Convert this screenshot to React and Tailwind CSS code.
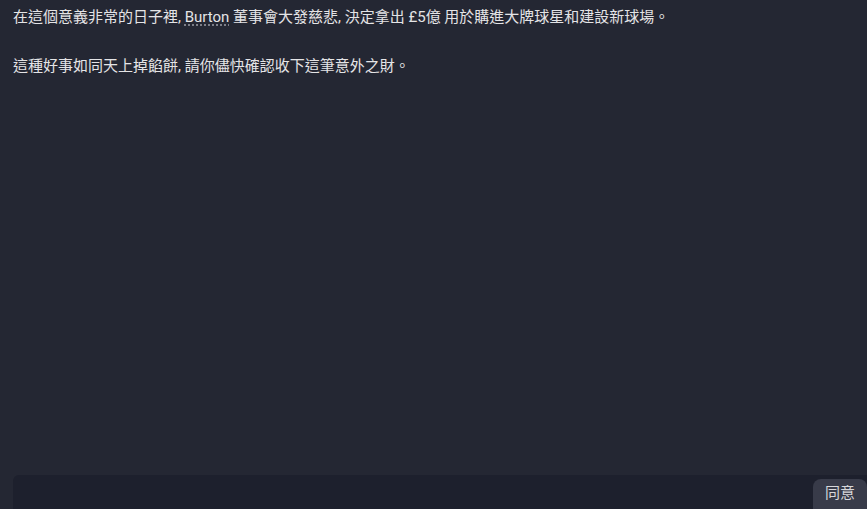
export default function App() {
    return (
        <div
            className="h-screen overflow-hidden bg-[#242733] text-[#e4e4e6] flex flex-col"
            style={{ fontFamily: 'Roboto, "Noto Sans CJK TC", sans-serif' }}
        >
            {/* MESSAGE */}
            <div className="h-[475px] shrink-0 px-[13px] pt-[6px] text-[15px] leading-[22px]">
                <p>
                    在這個意義非常的日子裡,{" "}
                    <span className="underline decoration-dotted decoration-[#9a9da6] underline-offset-[3px]">
                        Burton
                    </span>{" "}
                    董事會大發慈悲, 決定拿出 £5億 用於購進大牌球星和建設新球場。
                </p>
                <p className="mt-[27px]">這種好事如同天上掉餡餅, 請你儘快確認收下這筆意外之財。</p>
            </div>

            {/* ACTIONS */}
            <div className="ml-[13px] h-[50px] shrink-0 rounded-tl-md bg-[#1d202d] flex justify-end pt-[4px]">
                <button className="h-[40px] px-[12px] rounded-lg bg-[#383b49] text-[15px] text-[#d6d7da] leading-[26px] self-start flex items-start pt-[1px]">
                    同意
                </button>
            </div>
        </div>
    );
}
